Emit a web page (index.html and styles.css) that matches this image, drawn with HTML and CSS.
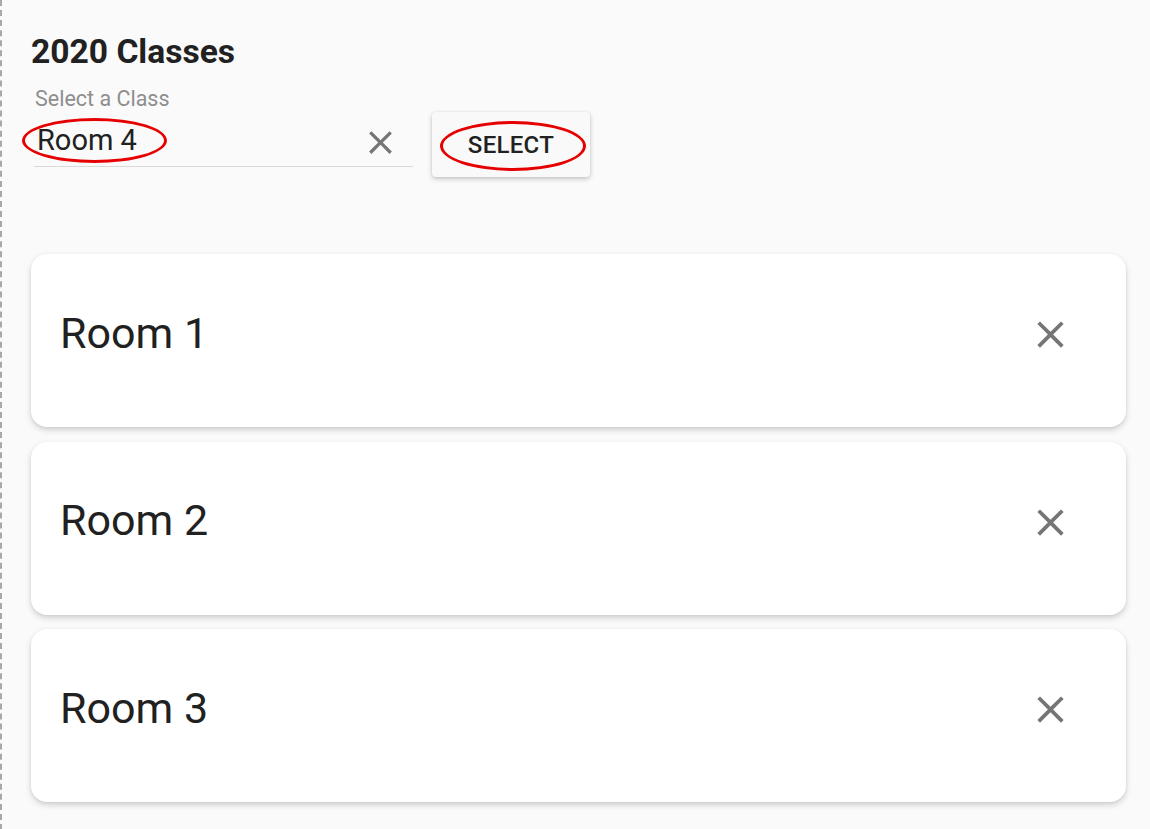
FILE: index.html
```html
<!DOCTYPE html>
<html lang="en">
<head>
<meta charset="utf-8">
<title>2020 Classes</title>
<link rel="stylesheet" href="styles.css">
</head>
<body>
<div class="page">
  <h1 class="title">2020 Classes</h1>
  <div class="picker">
    <div class="field">
      <label class="field-label" for="cls">Select a Class</label>
      <div class="input-row">
        <input id="cls" class="field-input" type="text" value="Room 4">
        <button class="icon-btn clear-btn" aria-label="Clear">
          <svg viewBox="0 0 24 24" class="icon-small"><path d="M19 6.41L17.59 5 12 10.59 6.41 5 5 6.41 10.59 12 5 17.59 6.41 19 12 13.41 17.59 19 19 17.59 13.41 12z"/></svg>
        </button>
      </div>
      <span class="mark mark-input"></span>
    </div>
    <button class="select-btn">SELECT<span class="mark mark-btn"></span></button>
  </div>
  <div class="cards">
    <div class="card">
      <span class="card-title">Room 1</span>
      <button class="icon-btn card-remove" aria-label="Remove">
        <svg viewBox="0 0 24 24" class="icon-large"><path d="M19 6.41L17.59 5 12 10.59 6.41 5 5 6.41 10.59 12 5 17.59 6.41 19 12 13.41 17.59 19 19 17.59 13.41 12z"/></svg>
      </button>
    </div>
    <div class="card">
      <span class="card-title">Room 2</span>
      <button class="icon-btn card-remove" aria-label="Remove">
        <svg viewBox="0 0 24 24" class="icon-large"><path d="M19 6.41L17.59 5 12 10.59 6.41 5 5 6.41 10.59 12 5 17.59 6.41 19 12 13.41 17.59 19 19 17.59 13.41 12z"/></svg>
      </button>
    </div>
    <div class="card">
      <span class="card-title">Room 3</span>
      <button class="icon-btn card-remove" aria-label="Remove">
        <svg viewBox="0 0 24 24" class="icon-large"><path d="M19 6.41L17.59 5 12 10.59 6.41 5 5 6.41 10.59 12 5 17.59 6.41 19 12 13.41 17.59 19 19 17.59 13.41 12z"/></svg>
      </button>
    </div>
  </div>
</div>
</body>
</html>
```

FILE: styles.css
```css
* { box-sizing: border-box; }

html, body {
  margin: 0;
  padding: 0;
  background: #fafafa;
}

body {
  font-family: Roboto, "Liberation Sans", Arial, sans-serif;
  color: #212121;
}

.page {
  min-height: 829px;
  border-left: 2px dashed #a8a8a8;
  padding: 31px 24px 28px 29px;
  background: #fafafa;
}

.title {
  margin: 0;
  font-size: 33.6px;
  line-height: 41px;
  font-weight: 700;
  color: #212121;
}

.picker {
  display: flex;
  align-items: flex-start;
  margin-top: 15px;
}

.field {
  position: relative;
  width: 379px;
  margin-left: 3px;
}

.field-label {
  display: block;
  font-size: 21.5px;
  line-height: 24px;
  color: #8e8e8e;
  padding-left: 1px;
}

.input-row {
  display: flex;
  align-items: center;
  margin-top: 12px;
  padding-bottom: 4px;
  border-bottom: 1px solid #d9d9d9;
}

.field-input {
  flex: 1;
  align-self: flex-start;
  min-width: 0;
  border: 0;
  outline: 0;
  background: transparent;
  padding: 0 0 0 3px;
  font-family: inherit;
  font-size: 29px;
  line-height: 34px;
  height: 34px;
  color: #212121;
}

.icon-btn {
  display: flex;
  align-items: center;
  justify-content: center;
  border: 0;
  padding: 0;
  background: transparent;
  cursor: pointer;
}

.icon-btn svg path { fill: #757575; }

.clear-btn { margin-right: 13px; }

.icon-small { width: 39px; height: 39px; display: block; }
.icon-large { width: 45px; height: 45px; display: block; }

.select-btn {
  position: relative;
  margin-left: 19px;
  margin-top: 25px;
  width: 158px;
  height: 65px;
  border: 0;
  border-radius: 4px;
  background: #f9f9f9;
  box-shadow: 0 2px 5px rgba(0, 0, 0, 0.22), 0 0 2px rgba(0, 0, 0, 0.08);
  font-family: inherit;
  font-size: 24px;
  font-weight: 500;
  letter-spacing: 0.3px;
  color: #212121;
  cursor: pointer;
  padding: 0;
}

.mark {
  position: absolute;
  border: 3px solid #e60000;
  border-radius: 50%;
  pointer-events: none;
}

.mark-input {
  left: -12px;
  top: 31px;
  width: 145px;
  height: 45px;
}

.mark-btn {
  left: 8px;
  top: 9px;
  width: 146px;
  height: 50px;
}

.cards {
  display: flex;
  flex-direction: column;
  gap: 14.5px;
  margin-top: 77px;
}

.card {
  height: 173px;
  display: flex;
  align-items: center;
  justify-content: space-between;
  padding: 0 53px 16px 29px;
  background: #ffffff;
  border-radius: 16px;
  box-shadow: 0 3px 6px rgba(0, 0, 0, 0.16), 0 1px 3px rgba(0, 0, 0, 0.06);
}

.card-title {
  font-size: 43px;
  line-height: 50px;
  color: #212121;
}

.card-remove { margin-top: 4px; }
```
